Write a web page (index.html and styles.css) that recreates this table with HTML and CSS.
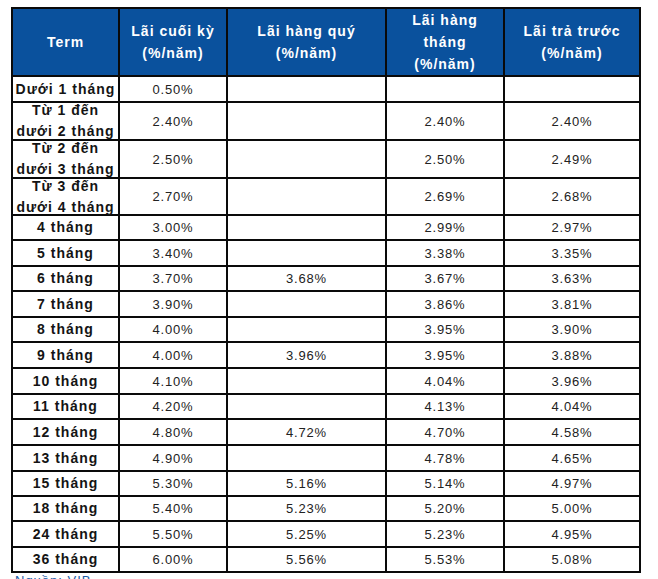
FILE: index.html
```html
<!DOCTYPE html>
<html lang="vi">
<head>
<meta charset="utf-8">
<title>Lãi suất tiết kiệm</title>
<link rel="stylesheet" href="styles.css">
</head>
<body>
<div class="page">
  <h2 class="title">VIB:</h2>
  <div class="rates" role="table">
    <div class="h">Term</div>
    <div class="h">Lãi cuối kỳ<br>(%/năm)</div>
    <div class="h">Lãi hàng quý<br>(%/năm)</div>
    <div class="h">Lãi hàng<br>tháng<br>(%/năm)</div>
    <div class="h">Lãi trả trước<br>(%/năm)</div>

    <div class="t">Dưới 1 tháng</div><div class="v">0.50%</div><div class="v"></div><div class="v"></div><div class="v"></div>
    <div class="t two">Từ 1 đến<br>dưới 2 tháng</div><div class="v">2.40%</div><div class="v"></div><div class="v">2.40%</div><div class="v">2.40%</div>
    <div class="t two">Từ 2 đến<br>dưới 3 tháng</div><div class="v">2.50%</div><div class="v"></div><div class="v">2.50%</div><div class="v">2.49%</div>
    <div class="t two">Từ 3 đến<br>dưới 4 tháng</div><div class="v">2.70%</div><div class="v"></div><div class="v">2.69%</div><div class="v">2.68%</div>
    <div class="t">4 tháng</div><div class="v">3.00%</div><div class="v"></div><div class="v">2.99%</div><div class="v">2.97%</div>
    <div class="t">5 tháng</div><div class="v">3.40%</div><div class="v"></div><div class="v">3.38%</div><div class="v">3.35%</div>
    <div class="t">6 tháng</div><div class="v">3.70%</div><div class="v">3.68%</div><div class="v">3.67%</div><div class="v">3.63%</div>
    <div class="t">7 tháng</div><div class="v">3.90%</div><div class="v"></div><div class="v">3.86%</div><div class="v">3.81%</div>
    <div class="t">8 tháng</div><div class="v">4.00%</div><div class="v"></div><div class="v">3.95%</div><div class="v">3.90%</div>
    <div class="t">9 tháng</div><div class="v">4.00%</div><div class="v">3.96%</div><div class="v">3.95%</div><div class="v">3.88%</div>
    <div class="t">10 tháng</div><div class="v">4.10%</div><div class="v"></div><div class="v">4.04%</div><div class="v">3.96%</div>
    <div class="t">11 tháng</div><div class="v">4.20%</div><div class="v"></div><div class="v">4.13%</div><div class="v">4.04%</div>
    <div class="t">12 tháng</div><div class="v">4.80%</div><div class="v">4.72%</div><div class="v">4.70%</div><div class="v">4.58%</div>
    <div class="t">13 tháng</div><div class="v">4.90%</div><div class="v"></div><div class="v">4.78%</div><div class="v">4.65%</div>
    <div class="t">15 tháng</div><div class="v">5.30%</div><div class="v">5.16%</div><div class="v">5.14%</div><div class="v">4.97%</div>
    <div class="t">18 tháng</div><div class="v">5.40%</div><div class="v">5.23%</div><div class="v">5.20%</div><div class="v">5.00%</div>
    <div class="t">24 tháng</div><div class="v">5.50%</div><div class="v">5.25%</div><div class="v">5.23%</div><div class="v">4.95%</div>
    <div class="t">36 tháng</div><div class="v">6.00%</div><div class="v">5.56%</div><div class="v">5.53%</div><div class="v">5.08%</div>
  </div>
  <p class="note">Nguồn: VIB</p>
</div>
</body>
</html>
```

FILE: styles.css
```css
html, body {
  margin: 0;
  padding: 0;
  background: #ffffff;
  overflow: hidden;
}

.page {
  padding-left: 11px;
  font-family: "Liberation Sans", Arial, sans-serif;
}

.title {
  margin: -16px 0 3px 6px;
  font-size: 17px;
  line-height: 20px;
  font-weight: bold;
  color: #1b5ba6;
  letter-spacing: 1px;
}

.rates {
  display: grid;
  width: 630px;
  box-sizing: border-box;
  grid-template-columns: 105px 106px 157px 116px 134px;
  grid-template-rows: 66px 24px 36px 36px 35px 23px 24px 23px 24px 23px 24px 24px 23px 24px 24px 23px 23px 24px 23px;
  gap: 2px;
  padding: 2px;
  background: #0a0a0a;
}

.h {
  background: #0a519d;
  color: #ffffff;
  font-weight: bold;
  font-size: 14px;
  line-height: 22px;
  letter-spacing: 1px;
  display: flex;
  align-items: center;
  justify-content: center;
  text-align: center;
}

.t {
  background: #ffffff;
  color: #141414;
  font-weight: bold;
  font-size: 14px;
  line-height: 21px;
  letter-spacing: 1px;
  display: flex;
  align-items: center;
  justify-content: center;
  text-align: center;
  white-space: nowrap;
}

.t.two {
  line-height: 21px;
}

.v {
  background: #ffffff;
  color: #222222;
  font-size: 13px;
  letter-spacing: 0.8px;
  display: flex;
  align-items: center;
  justify-content: center;
}

.note {
  margin: 0 0 0 4px;
  font-size: 13px;
  line-height: 16px;
  color: #1b5ba6;
  letter-spacing: 1px;
}
```
